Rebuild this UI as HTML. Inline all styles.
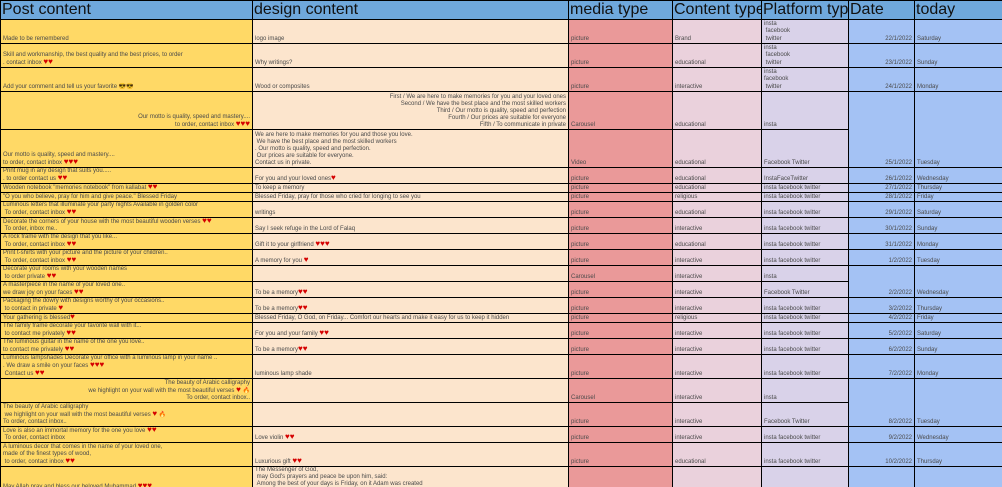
<!DOCTYPE html>
<html><head><meta charset="utf-8"><style>
html,body{margin:0;padding:0;background:#fff;width:1002px;height:487px;overflow:hidden}
table{border-collapse:collapse;table-layout:fixed;width:1003px;font-family:"Liberation Sans",Arial,sans-serif;font-size:6px;color:#4a4a4a}
td{border:1px solid #000;padding:0 2px;vertical-align:bottom;line-height:7px;white-space:nowrap;overflow:hidden}
th{border:1px solid #000;background:#6fa8dc;font-weight:normal;font-size:16px;line-height:18px;text-align:left;padding:0 1px;color:#111;white-space:nowrap;overflow:hidden;height:18px}
.p{background:#ffd966}.d{background:#fce5cd}.m{background:#ea9999}.c{background:#ead1dc}.f{background:#d9d2e9}.t{background:#a4c2f4;text-align:right}.y{background:#a4c2f4}
.r{text-align:right}
.h{color:#d40000;font-size:8px;line-height:6px}
.f{line-height:7.5px}
</style></head><body>
<table>
<colgroup><col style="width:252px"><col style="width:316px"><col style="width:104px"><col style="width:89px"><col style="width:87px"><col style="width:66px"><col style="width:89px"></colgroup>
<tr><th>Post content</th><th>design content</th><th>media type</th><th>Content type</th><th>Platform typ</th><th>Date</th><th>today</th></tr>
<tr style="height:24px"><td class="p">Made to be remembered</td><td class="d">logo image</td><td class="m">picture</td><td class="c">Brand</td><td class="f">insta<br>&nbsp;facebook<br>&nbsp;twitter</td><td class="t">22/1/2022</td><td class="y">Saturday</td></tr>
<tr style="height:24px"><td class="p">Skill and workmanship, the best quality and the best prices, to order<br>. contact inbox <span class="h">♥♥</span></td><td class="d">Why writings?</td><td class="m">picture</td><td class="c">educational</td><td class="f">insta<br>&nbsp;facebook<br>&nbsp;twitter</td><td class="t">23/1/2022</td><td class="y">Sunday</td></tr>
<tr style="height:24px"><td class="p">Add your comment and tell us your favorite 😎😎</td><td class="d">Wood or composites</td><td class="m">picture</td><td class="c">interactive</td><td class="f">insta<br>facebook<br>&nbsp;twitter</td><td class="t">24/1/2022</td><td class="y">Monday</td></tr>
<tr style="height:38px"><td class="p r">Our motto is quality, speed and mastery....<br>to order, contact inbox <span class="h">♥♥♥</span></td><td class="d r">First / We are here to make memories for you and your loved ones<br>Second / We have the best place and the most skilled workers<br>Third / Our motto is quality, speed and perfection<br>Fourth / Our prices are suitable for everyone<br>Fifth / To communicate in private</td><td class="m">Carousel</td><td class="c">educational</td><td class="f">insta</td><td class="t" rowspan="2">25/1/2022</td><td class="y" rowspan="2">Tuesday</td></tr>
<tr style="height:38px"><td class="p">Our motto is quality, speed and mastery....<br>to order, contact inbox <span class="h">♥♥♥</span></td><td class="d">We are here to make memories for you and those you love.<br>&nbsp;We have the best place and the most skilled workers<br>. Our motto is quality, speed and perfection.<br>&nbsp;Our prices are suitable for everyone.<br>Contact us in private.</td><td class="m">Video</td><td class="c">educational</td><td class="f">Facebook Twitter</td></tr>
<tr style="height:16px"><td class="p">Print mug in any design that suits you.....<br>. to order contact us <span class="h">♥♥</span></td><td class="d">For you and your loved ones<span class="h">♥</span></td><td class="m">picture</td><td class="c">educational</td><td class="f">InstaFaceTwitter</td><td class="t">26/1/2022</td><td class="y">Wednesday</td></tr>
<tr style="height:9px"><td class="p">Wooden notebook "memories notebook" from kallabat <span class="h">♥♥</span></td><td class="d">To keep a memory</td><td class="m">picture</td><td class="c">educational</td><td class="f">insta facebook twitter</td><td class="t">27/1/2022</td><td class="y">Thursday</td></tr>
<tr style="height:9px"><td class="p">"O you who believe, pray for him and give peace." Blessed Friday</td><td class="d">Blessed Friday, pray for those who cried for longing to see you</td><td class="m">picture</td><td class="c">religious</td><td class="f">insta facebook twitter</td><td class="t">28/1/2022</td><td class="y">Friday</td></tr>
<tr style="height:16px"><td class="p">Luminous letters that illuminate your party nights Available in golden color<br>&nbsp;To order, contact inbox <span class="h">♥♥</span></td><td class="d">writings</td><td class="m">picture</td><td class="c">educational</td><td class="f">insta facebook twitter</td><td class="t">29/1/2022</td><td class="y">Saturday</td></tr>
<tr style="height:16px"><td class="p">Decorate the corners of your house with the most beautiful wooden verses <span class="h">♥♥</span><br>&nbsp;To order, inbox me..</td><td class="d">Say I seek refuge in the Lord of Falaq</td><td class="m">picture</td><td class="c">interactive</td><td class="f">insta facebook twitter</td><td class="t">30/1/2022</td><td class="y">Sunday</td></tr>
<tr style="height:16px"><td class="p">A rock frame with the design that you like...<br>&nbsp;To order, contact inbox <span class="h">♥♥</span></td><td class="d">Gift it to your girlfriend <span class="h">♥♥♥</span></td><td class="m">picture</td><td class="c">educational</td><td class="f">insta facebook twitter</td><td class="t">31/1/2022</td><td class="y">Monday</td></tr>
<tr style="height:16px"><td class="p">Print t-shirts with your picture and the picture of your children..<br>&nbsp;To order, contact inbox <span class="h">♥♥</span></td><td class="d">A memory for you <span class="h">♥</span></td><td class="m">picture</td><td class="c">interactive</td><td class="f">insta facebook twitter</td><td class="t">1/2/2022</td><td class="y">Tuesday</td></tr>
<tr style="height:16px"><td class="p">Decorate your rooms with your wooden names<br>&nbsp;to order private <span class="h">♥♥</span></td><td class="d"></td><td class="m">Carousel</td><td class="c">interactive</td><td class="f">insta</td><td class="t" rowspan="2">2/2/2022</td><td class="y" rowspan="2">Wednesday</td></tr>
<tr style="height:16px"><td class="p">A masterpiece in the name of your loved one..<br>we draw joy on your faces <span class="h">♥♥</span></td><td class="d">To be a memory<span class="h">♥♥</span></td><td class="m">picture</td><td class="c">interactive</td><td class="f">Facebook Twitter</td></tr>
<tr style="height:16px"><td class="p">Packaging the dowry with designs worthy of your occasions..<br>&nbsp;to contact in private <span class="h">♥</span></td><td class="d">To be a memory<span class="h">♥♥</span></td><td class="m">picture</td><td class="c">interactive</td><td class="f">insta facebook twitter</td><td class="t">3/2/2022</td><td class="y">Thursday</td></tr>
<tr style="height:9px"><td class="p">Your gathering is blessed<span class="h">♥</span></td><td class="d">Blessed Friday, O God, on Friday... Comfort our hearts and make it easy for us to keep it hidden</td><td class="m">picture</td><td class="c">religious</td><td class="f">insta facebook twitter</td><td class="t">4/2/2022</td><td class="y">Friday</td></tr>
<tr style="height:16px"><td class="p">The family frame decorate your favorite wall with it...<br>&nbsp;to contact me privately <span class="h">♥♥</span></td><td class="d">For you and your family <span class="h">♥♥</span></td><td class="m">picture</td><td class="c">interactive</td><td class="f">insta facebook twitter</td><td class="t">5/2/2022</td><td class="y">Saturday</td></tr>
<tr style="height:16px"><td class="p">The luminous guitar in the name of the one you love..<br>to contact me privately <span class="h">♥♥</span></td><td class="d">To be a memory<span class="h">♥♥</span></td><td class="m">picture</td><td class="c">interactive</td><td class="f">insta facebook twitter</td><td class="t">6/2/2022</td><td class="y">Sunday</td></tr>
<tr style="height:24px"><td class="p">Luminous lampshades Decorate your office with a luminous lamp in your name ..<br>. We draw a smile on your faces <span class="h">♥♥♥</span><br>&nbsp;Contact us <span class="h">♥♥</span></td><td class="d">luminous lamp shade</td><td class="m">picture</td><td class="c">interactive</td><td class="f">insta facebook twitter</td><td class="t">7/2/2022</td><td class="y">Monday</td></tr>
<tr style="height:24px"><td class="p r">The beauty of Arabic calligraphy<br>we highlight on your wall with the most beautiful verses <span class="h">♥</span> 🔥<br>To order, contact inbox..</td><td class="d"></td><td class="m">Carousel</td><td class="c">interactive</td><td class="f">insta</td><td class="t" rowspan="2">8/2/2022</td><td class="y" rowspan="2">Tuesday</td></tr>
<tr style="height:24px"><td class="p">The beauty of Arabic calligraphy<br>&nbsp;we highlight on your wall with the most beautiful verses <span class="h">♥</span> 🔥<br>To order, contact inbox..</td><td class="d"></td><td class="m">picture</td><td class="c">interactive</td><td class="f">Facebook Twitter</td></tr>
<tr style="height:16px"><td class="p">Love is also an immortal memory for the one you love <span class="h">♥♥</span><br>&nbsp;To order, contact inbox</td><td class="d">Love violin <span class="h">♥♥</span></td><td class="m">picture</td><td class="c">interactive</td><td class="f">insta facebook twitter</td><td class="t">9/2/2022</td><td class="y">Wednesday</td></tr>
<tr style="height:24px"><td class="p">A luminous decor that comes in the name of your loved one,<br>made of the finest types of wood,<br>&nbsp;to order, contact inbox <span class="h">♥♥</span></td><td class="d">Luxurious gift <span class="h">♥♥</span></td><td class="m">picture</td><td class="c">educational</td><td class="f">insta facebook twitter</td><td class="t">10/2/2022</td><td class="y">Thursday</td></tr>
<tr style="height:30px"><td class="p" style="vertical-align:top;padding-top:16px">May Allah pray and bless our beloved Muhammad <span class="h">♥♥♥</span></td><td class="d" style="vertical-align:top">The Messenger of God,<br>&nbsp;may God's prayers and peace be upon him, said:<br>&nbsp;Among the best of your days is Friday, on it Adam was created</td><td class="m"></td><td class="c"></td><td class="f"></td><td class="t"></td><td class="y"></td></tr>
</table>
</body></html>
